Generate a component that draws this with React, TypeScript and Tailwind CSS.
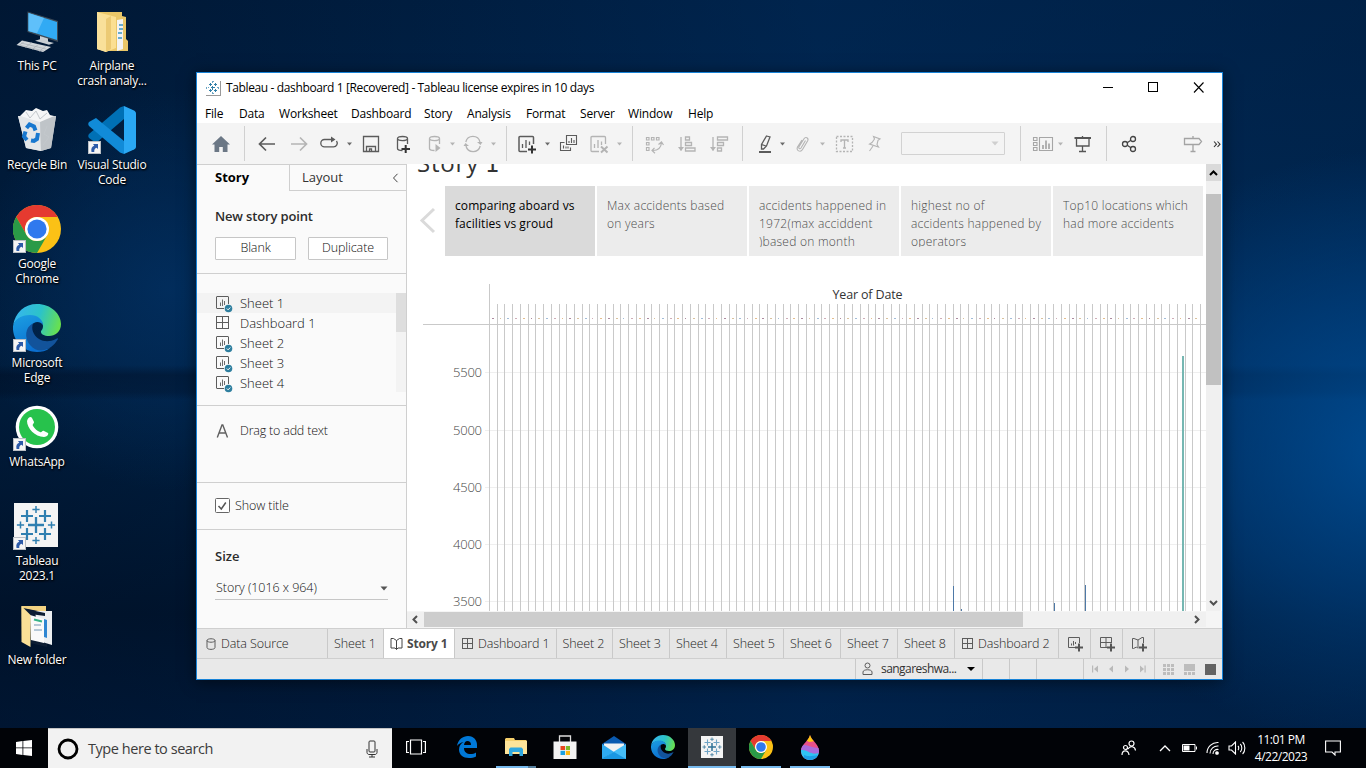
import React, { useId } from "react";

type Kids = { children?: React.ReactNode };

/* ---------- shared icons ---------- */

function Ico({ children, c = "text-[#5b5b5b]", m = "", w = 20, h = 20 }: Kids & { c?: string; m?: string; w?: number; h?: number }) {
  return (
    <svg width={w} height={h} viewBox={`0 0 ${w} ${h}`} className={`block shrink-0 ${c} ${m}`} fill="none" stroke="currentColor" strokeWidth="1.3">
      {children}
    </svg>
  );
}

function Caret({ m, c = "text-[#6a6a6a]" }: { m: string; c?: string }) {
  return (
    <svg width="7" height="4" viewBox="0 0 7 4" className={`block shrink-0 ${m} ${c}`}>
      <path d="M1 0.5h5L3.5 3.5z" fill="currentColor" />
    </svg>
  );
}

const Sep = ({ m }: { m: string }) => <div className={`h-[35px] w-px shrink-0 bg-[#d0d0d0] ${m}`} />;

function Shortcut() {
  return (
    <svg width="13" height="13" viewBox="0 0 13 13" className="absolute bottom-0 left-0">
      <rect x="0.5" y="0.5" width="12" height="12" fill="#f5f5f5" stroke="#b9bec4" />
      <path d="M3.500 11C2.800 7.500 4 5.400 6.300 4.800L5 3h5v5L8.600 6.700C6.800 7.300 6 8.600 6.300 11z" fill="#2c5aa8" />
    </svg>
  );
}

function Chrome({ s }: { s: number }) {
  return (
    <svg width={s} height={s} viewBox="0 0 48 48" className="block">
      <circle cx="24" cy="24" r="24" fill="#fbc116" />
      <path d="M3.200 12A24 24 0 0 1 44.800 12H24A12 12 0 0 0 13.600 30z" fill="#e53a30" />
      <path d="M3.200 12A24 24 0 0 0 24 48L34.400 30A12 12 0 0 1 13.600 30z" fill="#2a9a47" />
      <circle cx="24" cy="24" r="12" fill="#fff" />
      <circle cx="24" cy="24" r="9.600" fill="#3079ee" />
    </svg>
  );
}

function Edge({ s }: { s: number }) {
  const id = useId();
  return (
    <svg width={s} height={s} viewBox="0 0 48 48" className="block">
      <defs>
        <linearGradient id={id + "a"} x1="0" y1="0.3" x2="1" y2="0.5">
          <stop offset="0" stopColor="#36b4f0" />
          <stop offset="0.55" stopColor="#2cc3c8" />
          <stop offset="1" stopColor="#68e04f" />
        </linearGradient>
        <linearGradient id={id + "b"} x1="0" y1="0" x2="0.4" y2="1">
          <stop offset="0" stopColor="#1c9fe2" />
          <stop offset="1" stopColor="#0b6fd0" />
        </linearGradient>
      </defs>
      <path d="M0 22C2 8 12 0 24 0c14 0 24 10 24 20 0 8-6 12-12 12-5 0-8-2-8-4s2-2 2-6c0-5-5-10-13-10C8 12 2 16 0 22z" fill={`url(#${id}a)`} />
      <path d="M0 22C2 15 8 11 17 11c8 0 13 5 13 10-2-3-6-4-9-2-6 3-8 13-2 20 5 6 13 7 18 5-4 3-9 4-13 4C10 48-1 36 0 22z" fill={`url(#${id}b)`} />
      <path d="M20 19.500C12 23 11 34 17 41c6 7 14 7 21 2 3-2 5-5 7-8 0-1-1-1-2 0-6 3-12 3-17 0-6-4-8-10-6-15.500z" fill="#12539b" />
    </svg>
  );
}

function TableauMark({ s, small }: { s: number; small?: boolean }) {
  const plus = (x: number, y: number, r: number, w: number, c: string) => (
    <path key={`${x}-${y}`} d={`M${x - r} ${y}h${2 * r}M${x} ${y - r}v${2 * r}`} stroke={c} strokeWidth={w} />
  );
  const b = small ? "#2f7296" : "#2f7fb0";
  return (
    <svg width={s} height={s} viewBox="0 0 44 44" className="block">
      <rect width="44" height="44" fill="#f4f4f4" />
      {plus(22, 22, 8, small ? 3 : 2.3, b)}
      {plus(13, 13, 6, 2.2, small ? "#6fa3c4" : b)}
      {plus(31, 13, 6, 2.2, small ? "#6fa3c4" : b)}
      {plus(13, 31, 6, 2.2, small ? "#6fa3c4" : b)}
      {plus(31, 31, 6, 2.2, small ? "#6fa3c4" : b)}
      {plus(22, 6.5, 3.6, 1.5, b)}
      {plus(22, 37.5, 3.6, 1.5, b)}
      {plus(6.5, 22, 3.6, 1.5, b)}
      {plus(37.5, 22, 3.6, 1.5, b)}
    </svg>
  );
}

function TitleMark() {
  return (
    <svg width="14" height="14" viewBox="0 0 14 14" className="block" stroke="#2f7fa8" shapeRendering="crispEdges">
      <rect width="14" height="14" fill="#fff" stroke="none" />
      <path d="M5 6.500h4M6.500 5v4M3 3.500h3M4.500 2v3M8 3.500h3M9.500 2v3M3 9.500h3M4.500 8v3M8 9.500h3M9.500 8v3" />
      <path d="M6 .5h2M6 12.500h2M.5 6v2M12.500 6v2M2 6.500h1M11 6.500h1M6.500 1v1M6.500 11v1" stroke="#6aa5c4" />
    </svg>
  );
}

/* ---------- desktop ---------- */

function DeskIcon({ at, label, children, link }: Kids & { at: string; label: string[]; link?: boolean }) {
  return (
    <div className={`absolute flex w-[74px] flex-col items-center ${at}`}>
      <div className="relative flex h-[48px] w-[48px] items-center justify-center">
        {children}
        {link && <Shortcut />}
      </div>
      <div className="mt-[3px] text-center text-[12px] leading-[15px] tracking-[-0.24px] whitespace-nowrap text-white [text-shadow:1px_1px_2px_#000,0_1px_2px_#000]">
        {label.map((l) => (
          <div key={l}>{l}</div>
        ))}
      </div>
    </div>
  );
}

function Desktop() {
  return (
    <>
      <DeskIcon at="left-0 top-[7px]" label={["This PC"]}>
        <svg width="48" height="48" viewBox="0 0 48 48">
          <path d="M14.500 4.500L45 14v21L14.500 25z" fill="#3d4a57" />
          <path d="M15.500 6L44 15v18L15.500 24z" fill="#31aaf4" />
          <path d="M15.500 6L31 11 24 26.300 15.500 24z" fill="#5fc0fa" />
          <path d="M27 29l8 2.500v3l6 1.500-5 1.800-14-4 5-1.500z" fill="#c9ced3" />
          <path d="M9 33.500L38 40l-8 5L3.500 38z" fill="#d4d8dc" />
          <path d="M8 36l25 6M6 38l25 6M12 34l-6 4.500M19 35.500l-7 5M26 37l-7 5.500M33 39l-7 5.500" stroke="#a3aab0" strokeWidth="0.600" />
        </svg>
      </DeskIcon>
      <DeskIcon at="left-[75px] top-[7px]" label={["Airplane", "crash analy..."]}>
        <svg width="48" height="48" viewBox="0 0 48 48">
          <path d="M9 5h25v4l4 1v22l2 2v10H22L9 42z" fill="#e9c668" />
          <path d="M9 5l19 5v31l-10 4-9-3z" fill="#fbdf92" />
          <path d="M9 5l9 7v33L9 42z" fill="#f9e09a" />
          <path d="M18 12l5-3v33l-5 3z" fill="#ecca74" />
          <path d="M29 13l6-1v30l-6 2z" fill="#f3f3f3" />
          <path d="M31 22h4M30 26h4M30 31h4M31 18h4" stroke="#3a95c4" strokeWidth="1.600" />
        </svg>
      </DeskIcon>
      <DeskIcon at="left-0 top-[106px]" label={["Recycle Bin"]}>
        <svg width="48" height="48" viewBox="0 0 48 48">
          <path d="M5 10l38 0-5 32-10 3-15-3z" fill="#d3d7da" />
          <path d="M5 10l22 4 1 31-15-3z" fill="#e4e7e9" />
          <path d="M27 14l16-4-5 32-10 3z" fill="#bfc4c8" />
          <path d="M7 10l6-6 6 1 4-3 7 3 4-1 3 5 4 1-14 6z" fill="#f5f6f7" />
          <path d="M13 6l4 6 6-7 4 8 7-6M34 20l-3 8 5 3-6 8" stroke="#c3c8cc" fill="none" />
          <path d="M13.500 22l3-3.500 4.500 2 1.500 4M25 27l-1 6-3 2-3-.5M14 34l-3-3.500 1.500-5" fill="none" stroke="#1878cf" strokeWidth="4" />
        </svg>
      </DeskIcon>
      <DeskIcon at="left-[75px] top-[106px]" label={["Visual Studio", "Code"]} link>
        <svg width="48" height="48" viewBox="0 0 48 48">
          <path d="M36 0v13L8 37 1 32c-1-1-1-3 0-4L32 1.500z" fill="#0070b5" />
          <path d="M36 48V35L8 12l-7 4c-1 1-1 3 0 4l31 26.500z" fill="#118bd8" />
          <path d="M36 0l10 4.500c1 .5 2 1.500 2 3v33c0 1.500-1 2.500-2 3L36 48z" fill="#2aa8f4" />
        </svg>
      </DeskIcon>
      <DeskIcon at="left-0 top-[205px]" label={["Google", "Chrome"]} link>
        <Chrome s={48} />
      </DeskIcon>
      <DeskIcon at="left-0 top-[304px]" label={["Microsoft", "Edge"]} link>
        <Edge s={48} />
      </DeskIcon>
      <DeskIcon at="left-0 top-[403px]" label={["WhatsApp"]} link>
        <svg width="48" height="48" viewBox="0 0 48 48">
          <circle cx="24" cy="24" r="21.300" fill="#fff" />
          <circle cx="24" cy="24" r="18" fill="#27c24c" />
          <path d="M14 18c1-4 4-5 5-3l2 4c0 2-2 2-1 4 2 3 4 5 7 6 2 1 2-2 4-1l4 2c1 1-1 4-4 4-9 0-17-9-17-16z" fill="#fff" />
        </svg>
      </DeskIcon>
      <DeskIcon at="left-0 top-[502px]" label={["Tableau", "2023.1"]} link>
        <div className="-mt-[2px] mr-[2px]">
          <TableauMark s={44} />
        </div>
      </DeskIcon>
      <DeskIcon at="left-0 top-[601px]" label={["New folder"]}>
        <svg width="48" height="48" viewBox="0 0 48 48">
          <path d="M8.500 5h24.500v32l-24 4z" fill="#f3d382" />
          <path d="M10 7l25 5-1 34-17-4z" fill="#0c1d33" />
          <path d="M22 10l17 0v34l-13-4z" fill="#eceff1" />
          <path d="M13 8l19 4v3l-15-2z" fill="#0c1d33" />
          <path d="M31 18l3 1v18l-3-1z" fill="#2e86d2" />
          <path d="M17 14l14 4v24l-13-3z" fill="#fafafa" />
          <path d="M21 18.500l8 2" stroke="#35b387" strokeWidth="2" />
          <path d="M21 29h8M21 24h7" stroke="#9fb8cc" strokeWidth="1.500" />
          <path d="M8.500 5l9 9v32l-9-5z" fill="#fae096" />
        </svg>
      </DeskIcon>
    </>
  );
}

/* ---------- application window ---------- */

const MENUS: [string, string][] = [
  ["File", "w-[34px]"],
  ["Data", "w-[40px]"],
  ["Worksheet", "w-[72px]"],
  ["Dashboard", "w-[73px]"],
  ["Story", "w-[43px]"],
  ["Analysis", "w-[59px]"],
  ["Format", "w-[54px]"],
  ["Server", "w-[48px]"],
  ["Window", "w-[60px]"],
  ["Help", "w-[40px]"],
];

function TitleBar() {
  return (
    <div className="flex h-[30px] shrink-0 items-center bg-white pl-[9px] text-[12px] text-black">
      <div className="border-r border-b border-[#999]">
        <TitleMark />
      </div>
      <span className="ml-[5px] grow tracking-[-0.37px] whitespace-nowrap">Tableau - dashboard 1 [Recovered] - Tableau license expires in 10 days</span>
      <svg width="104" height="12" viewBox="0 0 104 12" className="mr-[18px] shrink-0" fill="none" stroke="#000" shapeRendering="crispEdges">
        <path d="M3 5.500h10" />
        <rect x="48.500" y="0.500" width="9" height="9" />
        <path d="M94 0.500l9.500 10M103.500 0.500l-9.500 10" shapeRendering="auto" strokeWidth="1.100" />
      </svg>
    </div>
  );
}

const G = "text-[#b4b4b4]";

function Toolbar() {
  const db = "M4.500 4.500v10c0 1 2 2 5 2M14.500 4.500v5.500M4.500 4.500c0-2.700 10-2.700 10 0s-10 2.700-10 0z";
  return (
    <div className="flex h-[41px] shrink-0 items-center overflow-hidden bg-[#f4f4f4]">
      <Ico m="ml-[14px]" c="text-[#6b7785]">
        <path d="M10 2L1 10.500h2.500V18h4.700v-5h3.600v5h4.700v-7.500H19z" fill="currentColor" stroke="none" />
      </Ico>
      <Sep m="ml-[13px]" />
      <Ico m="ml-[12px]"><path d="M18 10H3M9 3.500L2.500 10 9 16.500" strokeWidth="1.700" /></Ico>
      <Ico m="ml-[12px]" c={G}><path d="M2 10h15M11 3.500l6.500 6.500-6.500 6.500" strokeWidth="1.700" /></Ico>
      <Ico m="ml-[10px]">
        <path d="M7 5.500H5.500a3.700 3.700 0 0 0 0 7.400h9a3.700 3.700 0 0 0 3-5.900M5.500 5.500H14" />
        <path d="M12 2.500l4.500 3-4.500 3z" fill="currentColor" stroke="none" />
      </Ico>
      <Caret m="ml-[7px]" />
      <Ico m="ml-[8px]"><path d="M2.500 2.500h15v15h-15zM5.500 17v-4.500h9V17M8.500 17v-2h2v2" /></Ico>
      <Ico m="ml-[12px]">
        <path d={db} />
        <path d="M8.500 15h8.500M12.700 11v8" stroke="#333" strokeWidth="2" />
      </Ico>
      <Ico m="ml-[12px]" c={G}>
        <path d={db} />
        <path d="M10.500 10v8l5-4z" fill="currentColor" stroke="none" />
      </Ico>
      <Caret m="ml-[4px]" c={G} />
      <Ico m="ml-[7px]" c={G}>
        <path d="M2.800 8A7.300 7.300 0 0 1 17 8M17.200 12A7.300 7.300 0 0 1 3 12" />
        <path d="M14 8h5.500l-2 3zM.5 12H6l-3.500-3z" fill="currentColor" stroke="none" />
      </Ico>
      <Caret m="ml-[7px]" c={G} />
      <Sep m="ml-[9px]" />
      <Ico m="ml-[10px]">
        <path d="M10 17.500H3a1 1 0 0 1-1-1v-13a1 1 0 0 1 1-1h12.500a1 1 0 0 1 1 1V10" strokeWidth="1.500" />
        <path d="M5.500 14v-4M9 14V6M12.500 11V7.500" />
        <path d="M11 15.500h8M15 11.500v8" stroke="#333" strokeWidth="2" />
      </Ico>
      <Caret m="ml-[7px]" />
      <Ico m="ml-[8px]">
        <path d="M7.500 1.500h10v9h-10zM5.500 8.500h-4v8h10v-3M10 9V7M12.500 9V4M15 9V6M4.500 14.500v-3M7 14.500v-2M9 14.500v-2" strokeWidth="1.100" />
      </Ico>
      <Ico m="ml-[10px]" c={G}>
        <path d="M10 17.500H3a1 1 0 0 1-1-1v-13a1 1 0 0 1 1-1h12.500a1 1 0 0 1 1 1V10M5.500 14v-4M9 14V6M12.500 11V7.500" />
        <path d="M12 12.500l6.500 6M18.500 12.500l-6.500 6" strokeWidth="2" />
      </Ico>
      <Caret m="ml-[7px]" c={G} />
      <Sep m="ml-[9px]" />
      <Ico m="ml-[12px]" c={G}>
        <path d="M1.500 3.500h2.500v2.500H1.500zM6.500 3.500h2.500v2.500H6.500zM11.500 3.500H14v2.500h-2.500zM1.500 8.500h2.500v2.500H1.500zM1.500 13.500h2.500v3H1.500zM8 16.500c5 0 8-2.500 8.500-8M9.500 13.800L7 16.500l3 2.700M13.500 10.500l3-2.500 2 3" strokeWidth="1.200" />
      </Ico>
      <Ico m="ml-[12px]" c={G}>
        <path d="M4 3v13.500M8.500 3h4v3h-4zM8.500 8.500h6v3h-6zM8.500 14h9.500v3H8.500z" />
        <path d="M1 13h6l-3 4z" fill="currentColor" stroke="none" />
      </Ico>
      <Ico m="ml-[12px]" c={G}>
        <path d="M4 3v13.500M8.500 3h10v3h-10zM8.500 8.500h6v3h-6zM8.500 14h4v3h-4z" />
        <path d="M1 13h6l-3 4z" fill="currentColor" stroke="none" />
      </Ico>
      <Sep m="ml-[13px]" />
      <Ico m="ml-[12px]">
        <path d="M11.500 2l3.500 1-3.500 9-3 3h-2l0-4.500zM6.500 10.500l4.500 1.500" />
        <path d="M4 18h12" strokeWidth="2" />
      </Ico>
      <Caret m="ml-[4px]" />
      <Ico m="ml-[7px]" c={G}>
        <path d="M12.500 6.500L8 14c-1 1.500-3 .5-2-1.200l5-8c1.500-2.500 5-.8 3.700 2L9.500 15.500c-2 3.500-6.800 1-5-2.500L9 6" strokeWidth="1.100" />
      </Ico>
      <Caret m="ml-[6px]" c={G} />
      <Ico m="ml-[9px]" c={G}>
        <rect x="1.500" y="2.500" width="16" height="15" strokeDasharray="2 1.500" />
        <path d="M6 8V6h7v2M9.500 6v8M8 14h3" />
      </Ico>
      <Ico m="ml-[10px]" c={G}>
        <path d="M8.500 2.500l6.500 2.500-2 1.300-1 4.200 1.500 2.500-9-3 2.500-1.500 2.500-3.500zM8 12l-3.500 5" strokeWidth="1.100" />
      </Ico>
      <div className="ml-[16px] flex h-[23px] w-[104px] shrink-0 items-center justify-end rounded-[1px] border border-[#d2d2d2] pr-[5px]">
        <svg width="8" height="5" viewBox="0 0 8 5"><path d="M.5 .5h7L4 4.500z" fill="#cfcfcf" /></svg>
      </div>
      <Sep m="ml-[15px]" />
      <Ico m="ml-[11px]" c="text-[#a6a6a6]" w={22}>
        <path d="M1.500 3.500h3.500v3H1.500zM1.500 8.500h3.500v3H1.500zM1.500 13.500h3.500v3H1.500zM7.500 3.500h13v13h-13z" strokeWidth="1.100" />
        <path d="M11 15v-4M14 15V6.500M17 15V9.500" strokeWidth="1.700" />
      </Ico>
      <Caret m="ml-[3px]" c={G} />
      <Ico m="ml-[9px]" c="text-[#555]">
        <path d="M3.500 4v8h12.500V4M9.500 2v2M9.500 12v5M6 17.500h7" />
        <path d="M1.500 4h16.500" strokeWidth="2" />
      </Ico>
      <Sep m="ml-[13px]" />
      <Ico m="ml-[12px]" c="text-[#444]">
        <circle cx="6" cy="10" r="2.500" />
        <circle cx="14" cy="5" r="2.500" />
        <circle cx="14" cy="15" r="2.500" />
        <path d="M8.200 8.700l3.700-2.400M8.200 11.300l3.700 2.400" />
      </Ico>
      <Ico m="ml-[44px]" c="text-[#a3a3a3]">
        <path d="M1.500 4.500H16l2.500 3-2.500 3H1.500zM10 2v2.500M10 10.500v7M7.500 17.500h5" />
      </Ico>
      <Ico m="ml-[10px]" w={8} c="text-[#333]">
        <path d="M1 7.500l2.500 2.700L1 13M4.500 7.500L7 10.200 4.500 13" strokeWidth="1.100" />
      </Ico>
    </div>
  );
}

function SheetIcon() {
  return (
    <svg width="17" height="17" viewBox="0 0 17 17" className="mt-[3px] shrink-0" fill="none" stroke="#5c5c5c">
      <path d="M8 12.500H1a.5 .5 0 0 1-.5-.5V1a.5 .5 0 0 1 .5-.5h11a.5 .5 0 0 1 .5 .5v7" />
      <path d="M4.500 10V6.500M6.500 10V3.500M8.500 9V5" strokeWidth="0.900" />
      <circle cx="12.500" cy="12.500" r="3.800" fill="#2f7f9f" stroke="none" />
      <path d="M10.800 12.500l1.300 1.300 2.200-2.300" stroke="#fff" />
    </svg>
  );
}

function GridIcon({ m = "" }: { m?: string }) {
  return (
    <svg width="13" height="13" viewBox="0 0 13 13" className={`shrink-0 ${m}`} fill="none" stroke="#5c5c5c">
      <rect x="0.500" y="0.500" width="12" height="12" />
      <path d="M6.500 .5v12M.5 6.500h12" />
    </svg>
  );
}

function TabGridIcon() {
  return (
    <svg width="12" height="12" viewBox="0 0 12 12" className="mr-[4px] shrink-0" fill="none" stroke="#5c5c5c">
      <rect x="0.500" y="0.500" width="10" height="10" />
      <path d="M5.500 .5v10M.5 5.500h10" />
    </svg>
  );
}

function SidePanel() {
  const btn = "flex h-[23px] items-center justify-center rounded-[1px] border border-[#c6c6c6] bg-white tracking-[-0.1px]";
  return (
    <div className="flex w-[210px] shrink-0 flex-col border-t border-r border-[#cfcfcf] bg-[#fafafa] text-[12.5px] font-light text-[#111]">
      <div className="flex h-[26px] shrink-0">
        <div className="w-[92px] pl-[18px] text-[13px] leading-[25px] font-bold text-black">Story</div>
        <div className="flex grow items-center border-b border-l border-[#cfcfcf] pr-[7px] pl-[12px] text-[13px] font-normal text-[#333]">
          <span className="grow">Layout</span>
          <svg width="7" height="10" viewBox="0 0 7 10" fill="none" stroke="#444"><path d="M5.500 .8L1.500 5l4 4.200" /></svg>
        </div>
      </div>
      <div className="flex h-[83px] shrink-0 flex-col border-b border-[#cfcfcf] pl-[18px]">
        <div className="mt-[16px] text-[13px] leading-[18px] font-semibold tracking-[-0.15px] text-[#2c2c2c]">New story point</div>
        <div className="mt-[12px] flex gap-[12px]">
          <div className={`${btn} w-[81px]`}>Blank</div>
          <div className={`${btn} w-[80px]`}>Duplicate</div>
        </div>
      </div>
      <div className="flex h-[132px] shrink-0 items-start border-b border-[#cfcfcf] pt-[19px] text-[13px]">
        <div className="grow">
          {["Sheet 1", "Dashboard 1", "Sheet 2", "Sheet 3", "Sheet 4"].map((n, i) => (
            <div key={n} className={`flex h-[20px] pl-[19px] ${i === 0 ? "bg-[#f3f3f3]" : ""}`}>
              <div className="w-[24px]">{i === 1 ? <GridIcon m="mt-[3px]" /> : <SheetIcon />}</div>
              <span className="leading-[20px]">{n}</span>
            </div>
          ))}
        </div>
        <div className="h-[99px] w-[10px] bg-[#f3f3f3]">
          <div className="h-[39px] bg-[#dedede]" />
        </div>
      </div>
      <div className="flex h-[77px] shrink-0 border-b border-[#cfcfcf] pt-[15px] pl-[19px]">
        <svg width="24" height="20" viewBox="0 0 24 20" fill="none" stroke="#606060" strokeWidth="1.400"><path d="M1.300 16.500L6 4h.8l4.700 12.500M3 12h6.800" /></svg>
        <span className="leading-[20px] tracking-[-0.2px]">Drag to add text</span>
      </div>
      <div className="flex h-[47px] shrink-0 items-center border-b border-[#cfcfcf] pl-[18px]">
        <svg width="15" height="15" viewBox="0 0 15 15" className="mr-[5px] -mt-px" fill="none" stroke="#666">
          <rect x="0.500" y="0.500" width="14" height="14" fill="#fff" rx="1" />
          <path d="M3.500 8l2.800 3 4.500-6.500" stroke="#555" strokeWidth="1.500" />
        </svg>
        <span className="tracking-[-0.1px]">Show title</span>
      </div>
      <div className="pl-[18px]">
        <div className="mt-[17px] text-[13px] leading-[18px] font-semibold text-[#2c2c2c]">Size</div>
        <div className="mt-[12px] flex h-[23px] w-[173px] items-center justify-between border-b border-[#c6c6c6] pl-px">
          <span className="tracking-[-0.05px]">Story (1016 x 964)</span>
          <svg width="8" height="5" viewBox="0 0 8 5"><path d="M.5 .5h7L4 4.500z" fill="#555" /></svg>
        </div>
      </div>
    </div>
  );
}

const POINTS: string[][] = [
  ["comparing aboard vs", "facilities vs groud"],
  ["Max accidents based", "on years"],
  ["accidents happened in", "1972(max acciddent", ")based on month"],
  ["highest no of", "accidents happened by", "operators"],
  ["Top10 locations which", "had more accidents"],
];

const DOTS = ["#d9a15c", "#8a5a78", "#c9a674", "#7aa0c8", "#b98a9a"];
const lineX = (k: number) => 82 + Math.round(k * 7.728);

function Chart() {
  const ks = Array.from({ length: 92 }, (_, i) => i + 1);
  return (
    <svg width="799" height="327" viewBox="0 0 799 327" className="block" shapeRendering="crispEdges">
      {[88, 146, 203, 260, 317].map((y, i) => (
        <g key={y}>
          <rect x="78" y={y} width="721" height="1" fill="#efefef" />
          <text x="75" y={y + 5} textAnchor="end" fontSize="13" textLength="29" fontWeight="300" fill="#444">{5500 - i * 500}</text>
        </g>
      ))}
      <rect x="82" y="0" width="1" height="327" fill="#c9c9c9" />
      {ks.map((k) => (
        <rect key={k} x={lineX(k)} y="20" width="1" height="307" fill="#c9c9c9" />
      ))}
      {ks.map((k) => (
        <rect key={k} x={lineX(k - 1) + 3} y="34" width={k % 4 === 2 ? 1 : 2} height="1" opacity="0.7" fill={DOTS[k % 5]} />
      ))}
      <rect x="16" y="40" width="783" height="1" fill="#c9c9c9" />
      <text x="460.500" y="15" textAnchor="middle" fontSize="12.500" textLength="70" fill="#333">Year of Date</text>
      <rect x="546" y="302" width="1" height="25" fill="#4e79a7" />
      <rect x="554" y="325" width="1" height="2" fill="#4e79a7" />
      <rect x="647" y="319" width="1" height="8" fill="#4e79a7" />
      <rect x="678" y="301" width="1" height="26" fill="#4e79a7" />
      <rect x="775" y="72" width="2" height="255" fill="#76b7b2" />
    </svg>
  );
}

function StoryView() {
  return (
    <div className="flex min-w-0 grow flex-col">
      <div className="flex h-[447px]">
        <div className="flex w-[799px] shrink-0 flex-col overflow-hidden bg-white">
          <div className="flex h-[22px] shrink-0 items-end pl-[10px]">
            <span className="mb-[9px] text-[24px] leading-[26px] tracking-[0.8px] text-[#333]">
              Story <span className="-ml-[1px] font-['DejaVu_Sans'] text-[23px]">1</span>
            </span>
          </div>
          <div className="flex h-[98px] shrink-0 items-start">
            <svg width="38" height="70" viewBox="0 0 38 70" fill="none" stroke="#dadada" strokeWidth="3"><path d="M27 23L15 34.500 27 46" /></svg>
            <div className="flex gap-[2px]">
              {POINTS.map((p, i) => (
                <div
                  key={p[0]}
                  className={`h-[70px] w-[150px] pt-[11px] pl-[10px] text-[12px] ${i === 0 ? "bg-[#dadada] tracking-[0.08px] text-black" : "bg-[#ececec] font-light tracking-[0.25px] text-[#4c4c4c]"}`}
                >
                  <div className="h-[50px] overflow-hidden leading-[18px] whitespace-nowrap">
                    {p.map((l) => (
                      <div key={l}>{l}</div>
                    ))}
                  </div>
                </div>
              ))}
            </div>
          </div>
          <Chart />
        </div>
        <div className="flex w-[15px] flex-col bg-[#f0f0f0]">
          <div className="flex h-[17px] items-center justify-center bg-[#dadada]">
            <svg width="9" height="6" viewBox="0 0 9 6" fill="none" stroke="#000" strokeWidth="2"><path d="M1 5l3.500-3.500L8 5" /></svg>
          </div>
          <div className="mt-[13px] h-[191px] bg-[#c1c1c1]" />
          <div className="mt-auto flex h-[17px] items-center justify-center">
            <svg width="9" height="6" viewBox="0 0 9 6" fill="none" stroke="#505050" strokeWidth="2"><path d="M1 1l3.500 3.500L8 1" /></svg>
          </div>
        </div>
      </div>
      <div className="flex h-[17px] bg-[#f5f5f5] pt-px pb-px">
        <div className="flex w-[17px] items-center justify-center bg-[#f0f0f0]">
          <svg width="6" height="9" viewBox="0 0 6 9" className="-ml-px" fill="none" stroke="#505050" strokeWidth="2"><path d="M5 1L1.500 4.500 5 8" /></svg>
        </div>
        <div className="w-[599px] bg-[#cdcdcd]" />
        <div className="flex w-[183px] items-center justify-end bg-[#f0f0f0] pr-[6px]">
          <svg width="6" height="9" viewBox="0 0 6 9" fill="none" stroke="#505050" strokeWidth="2"><path d="M1 1l3.500 3.500L1 8" /></svg>
        </div>
      </div>
    </div>
  );
}

function AddIcon({ kind }: { kind: "sheet" | "grid" | "book" }) {
  return (
    <svg width="16" height="16" viewBox="0 0 16 16" fill="none" stroke="#5c5c5c">
      {kind === "sheet" && <path d="M8 11.500H1.500v-10h11V7M4.500 9.500v-2M6.500 9.500V5M8.500 8V6" />}
      {kind === "grid" && <path d="M8 11.500H1.500v-10h11V7M7 1.500v10M1.500 6.500h11" />}
      {kind === "book" && <path d="M7 12.500L5.500 11 2.500 12.500H1.500v-10H3L7 4l4-2.500h1.500V7M7 4v8" />}
      <path d="M8 11.500h8M12 7.500v8" strokeWidth="2" stroke="#555" />
    </svg>
  );
}

function Tabs() {
  const t = "flex shrink-0 items-center border-r border-[#c9c9c9]";
  const sheets = ["Sheet 2", "Sheet 3", "Sheet 4", "Sheet 5", "Sheet 6", "Sheet 7", "Sheet 8"];
  return (
    <div className="flex h-[31px] shrink-0 border-t border-b border-[#cfcfcf] bg-[#e6e6e6] text-[12.5px] font-light tracking-[-0.1px] whitespace-nowrap text-[#222]">
      <div className={`${t} w-[131px] pl-[9px]`}>
        <svg width="10" height="12" viewBox="0 0 10 12" className="mr-[5px]" fill="none" stroke="#5c5c5c"><path d="M1 2.500v7c0 2.500 8 2.500 8 0v-7M1 2.500c0-2.300 8-2.300 8 0s-8 2.300-8 0z" /></svg>
        <span className="mt-px">Data Source</span>
      </div>
      <div className={`${t} w-[56px] justify-center pt-px pr-[1px]`}>Sheet 1</div>
      <div className={`${t} w-[71px] bg-white pl-[6px] text-[12px] font-bold tracking-[-0.15px] text-[#4a4a4a]`}>
        <svg width="13" height="13" viewBox="0 0 13 13" className="mr-[4px]" fill="none" stroke="#444"><path d="M6.500 12.500L5 11H1V1.500h2.500l3 2 3-2H12V11H8zM6.500 3.500v9" /></svg>
        Story 1
      </div>
      <div className={`${t} w-[102px] pl-[7px]`}><TabGridIcon /><span className="mt-px">Dashboard 1</span></div>
      {sheets.map((s, i) => (
        <div key={s} className={`${t} justify-center pt-px pr-[2px] ${i === 0 ? "w-[56px]" : "w-[57px]"}`}>{s}</div>
      ))}
      <div className={`${t} w-[104px] pl-[7px]`}><TabGridIcon /><span className="mt-px">Dashboard 2</span></div>
      {(["sheet", "grid", "book"] as const).map((k) => (
        <div key={k} className={`${t} w-[32px] justify-center pt-[1px]`}><AddIcon kind={k} /></div>
      ))}
    </div>
  );
}

function StatusBar() {
  const c = "h-full shrink-0 border-l border-[#c9c9c9]";
  return (
    <div className="flex h-[20px] shrink-0 bg-[#e9e9e9]">
      <div className="w-[658px]" />
      <div className={`${c} flex w-[127px] items-center pl-[6px] text-[12px] tracking-[-0.55px] text-[#333]`}>
        <svg width="11" height="14" viewBox="0 0 11 14" className="mr-[8px]" fill="none" stroke="#5c5c5c"><circle cx="5.500" cy="3.500" r="2.500" /><path d="M1 12.500V10c0-3 9-3 9 0v2.500z" /></svg>
        <span className="w-[86px]">sangareshwa...</span>
        <svg width="8" height="4" viewBox="0 0 8 4" className="shrink-0"><path d="M0 0h8L4 4z" fill="#000" /></svg>
      </div>
      <div className={`${c} w-[27px]`} />
      <div className={`${c} w-[27px]`} />
      <div className={`${c} w-[47px]`} />
      <div className={`${c} flex w-[71px] items-center pl-[8px]`}>
        <svg width="56" height="8" viewBox="0 0 56 8" fill="#b9b9b9"><path d="M0 .5h1.200v7H0zM6 .5v7L2 4zM21 .5v7L17 4zM33 .5v7L37 4zM48 .5v7L52 4zM52.500 .5h1.200v7h-1.200z" /></svg>
      </div>
      <div className={`${c} flex grow items-center gap-[10px] pl-[8px]`}>
        <svg width="11" height="11" viewBox="0 0 11 11" fill="#bdbdbd"><path d="M0 0h3v3H0zM4 0h3v3H4zM8 0h3v3H8zM0 4h3v3H0zM4 4h3v3H4zM8 4h3v3H8zM0 8h3v3H0zM4 8h3v3H4zM8 8h3v3H8z" /></svg>
        <svg width="11" height="11" viewBox="0 0 11 11" fill="#bdbdbd"><path d="M0 0h11v7H0zM0 8h3v3H0zM4 8h3v3H4zM8 8h3v3H8z" /></svg>
        <div className="h-[11px] w-[11px] bg-[#636363]" />
      </div>
    </div>
  );
}

function AppWindow() {
  return (
    <div className="absolute top-[72px] left-[196px] flex h-[608px] w-[1027px] flex-col overflow-hidden border border-[#1883d7] bg-white shadow-[0_2px_14px_rgba(0,0,0,0.5)]">
      <TitleBar />
      <div className="flex h-[20px] shrink-0 items-center pt-[2px] pl-[4px] text-[12px] tracking-[-0.18px] text-black">
        {MENUS.map(([m, w]) => (
          <div key={m} className={`shrink-0 pl-[4px] ${w}`}>{m}</div>
        ))}
      </div>
      <Toolbar />
      <div className="flex h-[464px] shrink-0">
        <SidePanel />
        <StoryView />
      </div>
      <Tabs />
      <StatusBar />
    </div>
  );
}

/* ---------- taskbar ---------- */

function Task({ children, w, bar, on }: Kids & { w: string; bar?: string; on?: boolean }) {
  return (
    <div className={`flex h-full shrink-0 flex-col items-center ${w} ${on ? "bg-[#35383c]" : ""}`}>
      <div className="flex h-[38px] items-center">{children}</div>
      {bar && <div className={`h-[2px] bg-[#76b9ed] ${bar}`} />}
    </div>
  );
}

function Paint3D() {
  const id = useId();
  return (
    <svg width="18" height="25" viewBox="0 0 18 25">
      <defs>
        <clipPath id={id}>
          <path d="M9 0c1 5 9 9 9 16 0 5-4 9-9 9s-9-4-9-9C0 9 8 6 9 0z" />
        </clipPath>
      </defs>
      <g clipPath={`url(#${id})`}>
        <path d="M0 0h18v25H0z" fill="#e9508a" />
        <path d="M6 0h9v6L8 7 5 5z" fill="#fdc70f" />
        <path d="M0 11c5-3 9 2 18 2v5c-7 2-10-2-18-2z" fill="#a96bdc" />
        <path d="M0 15c6-1 9 5 18 3v7H0z" fill="#2fc3f3" />
        <path d="M3 20c5 2 8 1 14 0v5H3z" fill="#1d9fe6" />
      </g>
    </svg>
  );
}

function Taskbar() {
  return (
    <div className="absolute inset-x-0 bottom-0 flex h-[40px] items-center bg-[#010307] text-white">
      <div className="flex h-full w-[48px] shrink-0 items-center justify-center">
        <svg width="16" height="16" viewBox="0 0 16 16" fill="#fff"><path d="M0 2l6.500-1v6.500H0zM7.300 .9L16 0v7.500H7.300zM0 8.300h6.500V15L0 14zM7.300 8.300H16V16l-8.700-1z" /></svg>
      </div>
      <div className="flex h-full w-[344px] shrink-0 items-center border-t border-[#c4c4c4] bg-[#f2f2f2] pl-[9px]">
        <svg width="22" height="22" viewBox="0 0 22 22"><circle cx="11" cy="11" r="9" fill="none" stroke="#000" strokeWidth="2.800" /></svg>
        <span className="ml-[9px] grow text-[14.500px] tracking-[-0.45px] text-[#3c3c3c]">Type here to search</span>
        <svg width="12" height="18" viewBox="0 0 12 18" className="mr-[14px]" fill="none" stroke="#333"><rect x="3" y="1" width="6" height="11" rx="1" /><path d="M1 9v3.500c0 1 1 2 2 2h6c1 0 2-1 2-2V9M6 14.500V17M3 17h6" /></svg>
      </div>
      <Task w="w-[48px]">
        <svg width="20" height="16" viewBox="0 0 20 16" fill="none" stroke="#fff" strokeWidth="1.200"><path d="M4.500 1h11v14h-11zM3 2.500H.6v11H3M17 2.500h2.400v11H17" /></svg>
      </Task>
      <Task w="w-[54px]">
        <svg width="20" height="22" viewBox="0 0 20 22"><path d="M0 10C1 3.500 6 0 11 0c6 0 9 4.500 9 9v3H7c0 4 3 6 6.500 6 2 0 4-.5 5.500-1.500v4c-2 1-4.500 1.500-7 1.500-6 0-10-3.500-10-8.500C2 10 4 7.500 6.500 6 4 6.500 1.500 8 0 10zM7 9h7c0-3-1.500-4-3.500-4S7.500 6.500 7 9z" fill="#0078d7" /></svg>
      </Task>
      <Task w="w-[44px]" bar="w-[40px] border-r-[8px] border-[#56809f]">
        <svg width="22" height="18" viewBox="0 0 22 18"><path d="M0 1l1-1h8l1 2h11l1 1v13H0z" fill="#f5cf6c" /><path d="M0 3h22v13H0z" fill="#fde49a" /><path d="M4 18V11l1.500-1.500h11L18 11v7h-3.500v-4h-7v4z" fill="#2fa8e0" /></svg>
      </Task>
      <Task w="w-[54px]">
        <svg width="24" height="24" viewBox="0 0 24 24"><path d="M6.500 7V1h11v6" fill="none" stroke="#ddd" strokeWidth="1.300" /><path d="M.5 6.500h23V24H.5z" fill="#f3f3f3" /><path d="M7.500 11H12v4H7.500z" fill="#e8461f" /><path d="M12.800 11H17v4h-4.200z" fill="#7db928" /><path d="M7.500 15.800H12V20H7.500z" fill="#1ba1e2" /><path d="M12.800 15.800H17V20h-4.200z" fill="#fbb813" /></svg>
      </Task>
      <Task w="w-[44px]">
        <svg width="24" height="23" viewBox="0 0 24 23"><path d="M0 8l12-8 12 8v3H0z" fill="#0a5ab0" /><path d="M2 7.500h20V16H2z" fill="#f2f2f2" /><path d="M0 8l12 8-12 7z" fill="#2eaaf0" /><path d="M24 8v15H0z" fill="#45bdf7" /><path d="M0 23h24l-12-7z" fill="#1a97e2" /></svg>
      </Task>
      <Task w="w-[52px]"><div className="pl-[2px]"><Edge s={24} /></div></Task>
      <Task w="w-[48px]" bar="w-full" on><div className="pr-[1px]"><TableauMark s={22} small /></div></Task>
      <Task w="w-[50px]" bar="w-[40px]"><Chrome s={24} /></Task>
      <Task w="w-[48px]" bar="w-[40px]"><Paint3D /></Task>
      <div className="ml-auto flex h-full items-center pr-[25px]">
        <svg width="16" height="16" viewBox="0 0 16 16" fill="none" stroke="#fff" strokeWidth="1.200"><circle cx="10.500" cy="3.500" r="2.500" /><circle cx="4.500" cy="7.500" r="2" /><path d="M7 9c2-3.500 7-3 7.500 1.500M1 15c0-5.500 6.500-5.500 7 0" /></svg>
        <svg width="12" height="7" viewBox="0 0 12 7" className="ml-[22px]" fill="none" stroke="#fff" strokeWidth="1.300"><path d="M1 6l5-5 5 5" /></svg>
        <svg width="15" height="10" viewBox="0 0 15 10" className="ml-[11px]" fill="none" stroke="#fff"><path d="M.5 1.500h12.500v7H.5zM14.500 3.500v3" /><path d="M1.500 2.500h6v5h-6z" fill="#fff" stroke="none" /></svg>
        <svg width="14" height="14" viewBox="0 0 14 14" className="ml-[9px]" fill="none" stroke="#fff" strokeWidth="1.100"><path d="M1 12C1 6 6 1 12.500 1.500M4 12.500C4 8 8 4.500 12.500 5M7 13c0-3 2.500-5 5.500-4.500" /><circle cx="11" cy="12" r="1.300" fill="#fff" /></svg>
        <svg width="18" height="14" viewBox="0 0 18 14" className="ml-[8px]" fill="none" stroke="#fff" strokeWidth="1.100"><path d="M1 5h2.500L7.500 1v12l-4-4H1zM10 5c1 1 1 3 0 4M12.300 3c2 2 2 6 0 8M14.600 1c3 3 3 9 0 12" /></svg>
        <div className="ml-[8px] w-[54px] text-center text-[12px] leading-[17px] tracking-[-0.5px] whitespace-nowrap">
          <div>11:01 PM</div>
          <div>4/22/2023</div>
        </div>
        <svg width="16" height="16" viewBox="0 0 16 16" className="ml-[17px]" fill="none" stroke="#fff" strokeWidth="1.100"><path d="M.6 1h14.800v11H10v3l-3-3H.6z" /></svg>
      </div>
    </div>
  );
}

export default function App() {
  return (
    <div className="relative h-[768px] w-[1366px] overflow-hidden bg-[#00224a] bg-[radial-gradient(ellipse_340px_300px_at_1390px_450px,rgba(0,86,165,0.75)_0%,rgba(0,74,146,0.5)_50%,transparent_100%),linear-gradient(180deg,transparent_365px,rgba(0,10,28,0.4)_375px,rgba(0,10,28,0.3)_392px,transparent_400px),radial-gradient(ellipse_200px_200px_at_170px_290px,rgba(2,46,94,0.9)_0%,transparent_100%),linear-gradient(90deg,rgba(0,14,34,0.4)_0%,rgba(0,30,70,0)_30%,rgba(0,50,105,0.35)_60%,rgba(0,40,85,0.35)_100%),linear-gradient(180deg,#001d3f_0%,#002750_45%,#00152f_80%,#001c40_100%)] font-['Open_Sans','Noto_Sans',sans-serif]">
      <Desktop />
      <AppWindow />
      <Taskbar />
    </div>
  );
}
